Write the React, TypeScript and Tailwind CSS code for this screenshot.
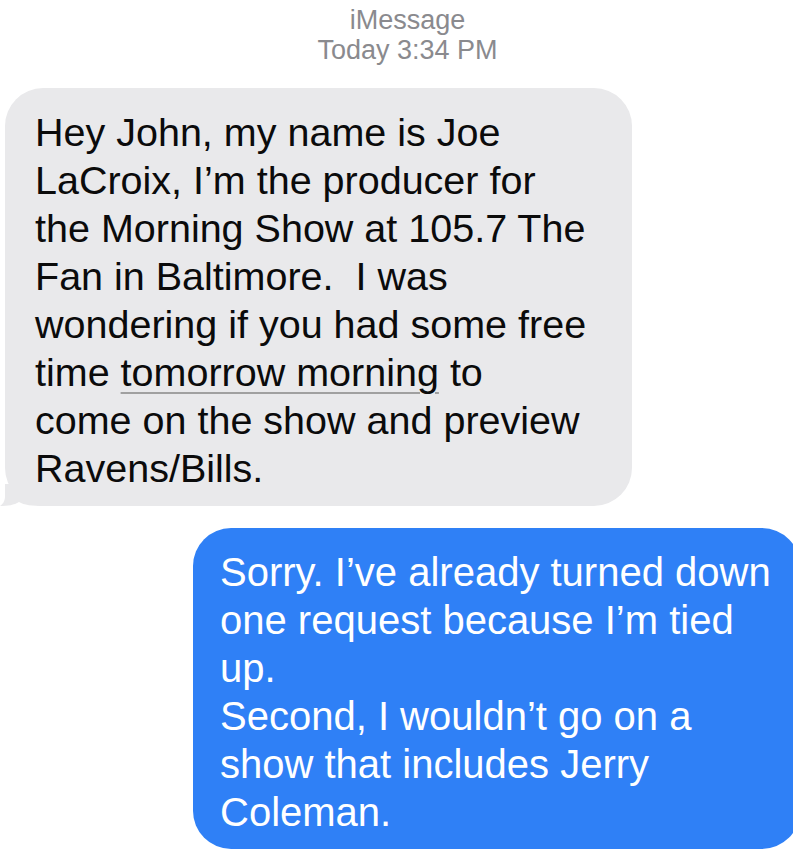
export default function App() {
  const received = [
    "Hey John, my name is Joe",
    "LaCroix, I’m the producer for",
    "the Morning Show at 105.7 The",
    "Fan in Baltimore.  I was",
    "wondering if you had some free",
  ];
  const sent = [
    "Sorry. I’ve already turned down",
    "one request because I’m tied",
    "up.",
    "Second, I wouldn’t go on a",
    "show that includes Jerry",
    "Coleman.",
  ];

  return (
    <div className="w-[793px] h-[856px] overflow-hidden bg-white font-['Liberation_Sans',Arial,sans-serif]">
      {/* header */}
      <div className="pt-[5px] pl-[22px] flex flex-col items-center text-[27px] leading-[30px] text-[#8a8a8e]">
        <span>iMessage</span>
        <span>Today 3:34 PM</span>
      </div>

      {/* incoming bubble */}
      <div className="relative mt-[23px] ml-[5px] w-[627px] rounded-[38px] bg-[#e9e9eb] pt-[20px] pb-[14px] pl-[30px] text-[39.5px] leading-[48px] text-[#0b0b0b] whitespace-pre">
        <svg
          className="absolute left-[-5px] bottom-0"
          width="44"
          height="22"
          viewBox="0 0 44 22"
        >
          <path
            d="M5 0 L5 12 C5 17 3 20 0 22 C8 22 14 21 19 18 C24 21 32 22 44 22 L44 0 Z"
            fill="#e9e9eb"
          />
        </svg>
        <div className="relative">
          {received.map((line) => (
            <div key={line}>{line}</div>
          ))}
          <div>
            time{" "}
            <span className="underline decoration-[#a0a0a0] decoration-[2px] underline-offset-[6px]">
              tomorrow morning
            </span>{" "}
            to
          </div>
          <div>come on the show and preview</div>
          <div>Ravens/Bills.</div>
        </div>
      </div>

      {/* outgoing bubble */}
      <div className="mt-[22px] ml-[193px] w-[607px] rounded-[38px] bg-[#2f80f6] pt-[20px] pb-[13px] pl-[27px] text-[40px] leading-[48px] text-white whitespace-pre">
        {sent.map((line) => (
          <div key={line}>{line}</div>
        ))}
      </div>
    </div>
  );
}
